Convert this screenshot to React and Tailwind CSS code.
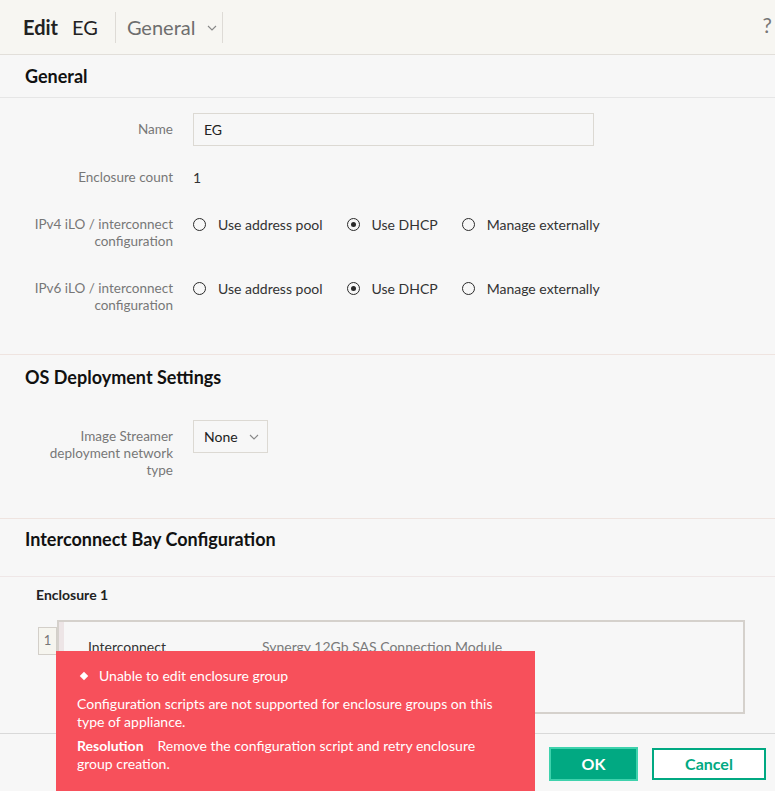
import React from "react";

function Radio({ checked, label }) {
  return (
    <div className="flex items-center">
      <span className="w-[13px] h-[13px] rounded-full border-[1.5px] border-[#2a2a2a] flex items-center justify-center">
        {checked && <span className="w-[5px] h-[5px] rounded-full bg-[#2a2a2a]" />}
      </span>
      <span className="ml-[12px] text-[14px] text-[#333]">{label}</span>
    </div>
  );
}

function RadioGroup() {
  return (
    <div className="flex items-center gap-[24px] h-[17px]">
      <Radio label="Use address pool" />
      <Radio checked label="Use DHCP" />
      <Radio label="Manage externally" />
    </div>
  );
}

function Label({ children, className = "" }) {
  return (
    <div className={"w-[173px] text-right text-[13.5px] leading-[17px] text-[#777] shrink-0 " + className}>
      {children}
    </div>
  );
}

function Chevron({ className = "" }) {
  return (
    <svg className={className} width="10" height="6" viewBox="0 0 10 6" fill="none">
      <path d="M1 1l4 4 4-4" stroke="#888" strokeWidth="1.1" />
    </svg>
  );
}

export default function App() {
  return (
    <div
      className="relative w-[775px] h-[791px] overflow-hidden bg-[#f7f7f7] flex flex-col text-[#333]"
      style={{ fontFamily: "Lato, 'Noto Sans', sans-serif" }}
    >
      {/* Header */}
      <div className="h-[55px] shrink-0 bg-[#f7f6f2] border-b border-[#e2dfda] flex items-center">
        <span className="ml-[23px] text-[20px] font-bold text-[#222]">Edit</span>
        <span className="ml-[14px] text-[20px] text-[#222]">EG</span>
        <div className="ml-[17px] w-px h-[31px] bg-[#dedbd6]" />
        <div className="ml-[11px] flex items-center">
          <span className="text-[20px] text-[#6e6e6e]">General</span>
          <Chevron className="ml-[12px] mt-[2px]" />
        </div>
        <div className="ml-[5px] w-px h-[31px] bg-[#dedbd6]" />
        <div className="flex-1" />
        <span className="mr-[3px] text-[21px] text-[#777] -mt-[4px]">?</span>
      </div>

      {/* Content */}
      <div className="flex-1 overflow-hidden">
        {/* General */}
        <div className="h-[43px] border-b border-[#e6e6e6] flex items-center pl-[25px]">
          <span className="text-[18px] font-bold text-[#111]">General</span>
        </div>
        <div className="border-b border-[#efe4e0] pb-[40px]">
          <div className="flex items-center mt-[15px]">
            <Label>Name</Label>
            <div className="ml-[20px] w-[401px] h-[33px] border border-[#dcd9d3] flex items-center pl-[10px] text-[14px] text-[#222]">
              EG
            </div>
          </div>
          <div className="flex items-center mt-[23px]">
            <Label>Enclosure count</Label>
            <span className="ml-[20px] text-[14px] leading-[17px] text-[#333]">1</span>
          </div>
          <div className="flex items-start mt-[30px]">
            <Label>
              IPv4 iLO / interconnect
              <br />
              configuration
            </Label>
            <div className="ml-[20px]">
              <RadioGroup />
            </div>
          </div>
          <div className="flex items-start mt-[30px]">
            <Label>
              IPv6 iLO / interconnect
              <br />
              configuration
            </Label>
            <div className="ml-[20px]">
              <RadioGroup />
            </div>
          </div>
        </div>

        {/* OS Deployment */}
        <div className="border-b border-[#efe4e0] pb-[39px]">
          <div className="h-[44px] flex items-center pl-[25px]">
            <span className="text-[18px] font-bold text-[#111]">OS Deployment Settings</span>
          </div>
          <div className="flex items-start mt-[21px]">
            <Label className="pt-[8px]">
              Image Streamer
              <br />
              deployment network
              <br />
              type
            </Label>
            <div className="ml-[20px] w-[75px] h-[33px] border border-[#dcd9d3] flex items-center justify-between pl-[10px] pr-[8px] text-[14px] text-[#222]">
              <span>None</span>
              <Chevron />
            </div>
          </div>
        </div>

        {/* Interconnect Bay */}
        <div className="h-[41px] flex items-center pl-[25px]">
          <span className="text-[18px] font-bold text-[#111]">Interconnect Bay Configuration</span>
        </div>
        <div className="mt-[16px] border-t border-[#efe7e7]">
          <div className="pl-[36px] mt-[9px] text-[14px] font-bold text-[#222] leading-[17px]">Enclosure 1</div>
          <div className="flex items-start ml-[38px] mt-[17px]">
            <div className="mt-[7px] w-[19px] h-[28px] border border-[#d3cfc9] bg-[#f6f5ef] flex items-center justify-center text-[13px] text-[#777]">
              1
            </div>
            <div className="w-[688px] h-[94px] border-2 border-[#d5d1cc] flex">
              <div className="w-[5px] bg-[#ede5e6]" />
              <div className="flex items-start pt-[14px]">
                <span className="ml-[24px] w-[174px] text-[14px] text-[#333]">Interconnect</span>
                <span className="text-[14px] text-[#7a7a7a]">Synergy 12Gb SAS Connection Module</span>
              </div>
            </div>
          </div>
        </div>
      </div>

      {/* Footer */}
      <div className="h-[58px] shrink-0 border-t border-[#d9d9d9] flex items-center justify-end pr-[9px] pt-[2px] gap-[14px]">
        <button className="w-[89px] h-[34px] bg-[#01a982] border-2 border-[#3fd2ad] text-white text-[16px] font-bold">
          OK
        </button>
        <button className="w-[114px] h-[32px] bg-white border-2 border-[#01a982] text-[#01a982] text-[16px] font-bold">
          Cancel
        </button>
      </div>

      {/* Error toast */}
      <div className="absolute left-[56px] top-[651px] w-[479px] h-[140px] bg-[#f7505b] text-white pl-[21px] pr-[33px] pt-[16px]">
        <div className="flex items-center text-[14px] leading-[18px]">
          <span className="w-[6px] h-[6px] bg-white rotate-45 ml-[4px]" />
          <span className="ml-[12px]">Unable to edit enclosure group</span>
        </div>
        <div className="mt-[10px] text-[14px] leading-[18px]">
          Configuration scripts are not supported for enclosure groups on this type of appliance.
        </div>
        <div className="mt-[6px] text-[14px] leading-[18px]">
          <span className="font-bold mr-[14px]">Resolution</span>
          Remove the configuration script and retry enclosure group creation.
        </div>
      </div>
    </div>
  );
}
